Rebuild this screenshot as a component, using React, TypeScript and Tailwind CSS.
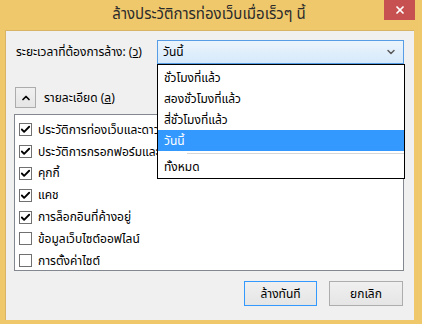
import { Check, ChevronDown, ChevronUp, X } from 'lucide-react'

const items = [
  { label: 'ประวัติการท่องเว็บและดาวน์โหลด', checked: true },
  { label: 'ประวัติการกรอกฟอร์มและค้นหา', checked: true },
  { label: 'คุกกี้', checked: true },
  { label: 'แคช', checked: true },
  { label: 'การล็อกอินที่ค้างอยู่', checked: true },
  { label: 'ข้อมูลเว็บไซต์ออฟไลน์', checked: false },
  { label: 'การตั้งค่าไซต์', checked: false },
]

const ranges = ['ชั่วโมงที่แล้ว', 'สองชั่วโมงที่แล้ว', 'สี่ชั่วโมงที่แล้ว', 'วันนี้']

const font = { fontFamily: 'Tahoma, "Noto Sans Thai", "Leelawadee UI", "DejaVu Sans", sans-serif' }

function CheckBox({ checked }: { checked: boolean }) {
  return (
    <span className="w-[13px] h-[13px] border border-[#707070] bg-white flex items-center justify-center shrink-0">
      {checked && <Check className="w-[11px] h-[11px] text-black" strokeWidth={4} />}
    </span>
  )
}

export default function App() {
  return (
    <div className="w-[422px] h-[324px] bg-[#EFC86C] flex flex-col text-[12px] text-black" style={font}>
      {/* Title bar */}
      <div className="relative h-[30px] flex items-center justify-center shrink-0">
        <span className="text-[15px] text-[#2b2b2b] pr-[4px]">ล้างประวัติการท่องเว็บเมื่อเร็วๆ นี้</span>
        <div className="absolute top-0 right-[7px] w-[31px] h-[20px] bg-[#C75050] flex items-center justify-center">
          <X className="w-[12px] h-[12px] text-white" strokeWidth={3.5} />
        </div>
      </div>

      {/* Content */}
      <div className="relative flex-1 ml-[5px] mr-[8px] mb-[4px] bg-[#F0F0F0] border-t border-l border-[#D8B466] flex flex-col pl-[8px] pr-[10px]">
        <div className="flex items-center mt-[9px] h-[24px]">
          <span className="ml-[2px]">
            ระยะเวลาที่ต้องการล้าง: (<span className="underline">ว</span>)
          </span>
          <div className="ml-auto w-[247px] h-[24px] border border-[#569DE5] bg-gradient-to-b from-[#EBF4FC] to-[#D6E9FB] flex items-center pl-[5px] pr-[6px]">
            <span>วันนี้</span>
            <ChevronDown className="ml-auto w-[12px] h-[12px] text-[#5a5a5a]" strokeWidth={3} />
          </div>
        </div>

        <div className="flex items-center mt-[23px] h-[21px]">
          <div className="w-[21px] h-[21px] border border-[#ACACAC] bg-gradient-to-b from-[#F0F0F0] to-[#E5E5E5] flex items-center justify-center ml-[1px]">
            <ChevronUp className="w-[12px] h-[12px] text-black" strokeWidth={3.5} />
          </div>
          <span className="ml-[8px]">
            รายละเอียด (<span className="underline">ล</span>)
          </span>
        </div>

        <div className="mt-[6px] h-[157px] bg-white border border-[#828790] pt-[4px] pl-[4px]">
          {items.map((it) => (
            <div key={it.label} className="flex items-center h-[21.8px]">
              <CheckBox checked={it.checked} />
              {/* labels run under the open list, so clip them at its edge */}
              <span className="ml-[6px] max-w-[119px] overflow-hidden whitespace-nowrap">{it.label}</span>
            </div>
          ))}
        </div>

        <div className="flex justify-end gap-[12px] mt-[10px] pr-[1px]">
          <div className="w-[73px] h-[25px] border border-[#3399FF] bg-gradient-to-b from-[#F0F0F0] to-[#E5E5E5] flex items-center justify-center">
            ล้างทันที
          </div>
          <div className="w-[74px] h-[25px] border border-[#ADADAD] bg-gradient-to-b from-[#F0F0F0] to-[#E5E5E5] flex items-center justify-center">
            ยกเลิก
          </div>
        </div>

        {/* Open dropdown list */}
        <div className="absolute left-[151px] top-[33px] w-[248px] bg-white border border-black pt-[2px] pb-[1px]">
          {ranges.map((r) => (
            <div
              key={r}
              className={
                r === 'วันนี้'
                  ? 'h-[21px] flex items-center pl-[6px] bg-[#3399FF] text-white'
                  : 'h-[21px] flex items-center pl-[6px]'
              }
            >
              {r}
            </div>
          ))}
          <div className="py-[2px] pl-[29px]">
            <div className="h-px bg-[#D7D7D7]" />
          </div>
          <div className="h-[21px] flex items-center pl-[6px]">ทั้งหมด</div>
        </div>
      </div>
    </div>
  )
}
